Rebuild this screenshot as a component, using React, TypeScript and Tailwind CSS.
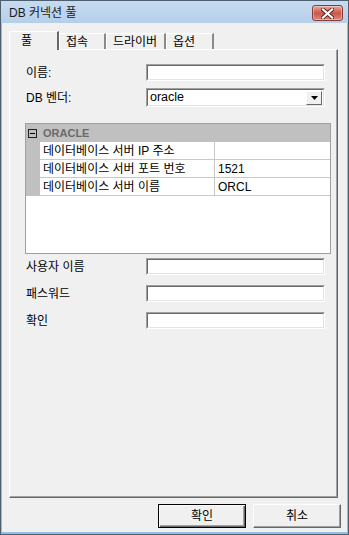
import type { ReactNode } from 'react'

const font = "font-['Liberation_Sans','Noto_Sans_CJK_KR',sans-serif]"

// sunken classic edit box
function Sunken({ className = '', children }: { className?: string; children?: ReactNode }) {
  return (
    <div className={`border border-t-[#a0a0a0] border-l-[#a0a0a0] border-b-white border-r-white ${className}`}>
      <div className="h-full bg-white border border-t-[#696969] border-l-[#696969] border-b-[#e3e3e3] border-r-[#e3e3e3] flex items-center">
        {children}
      </div>
    </div>
  )
}

function Row({ label, children }: { label: string; children?: ReactNode }) {
  return (
    <div className="flex items-center">
      <span className="w-[120px] text-[12px] leading-none">{label}</span>
      {children ?? <Sunken className="w-[179px] h-[17px]" />}
    </div>
  )
}

const tabs = [
  { label: '접속', w: 'w-[47px]' },
  { label: '드라이버', w: 'w-[60px]' },
  { label: '옵션', w: 'w-[48px]' },
]

const props = [
  ['데이터베이스 서버 IP 주소', ''],
  ['데이터베이스 서버 포트 번호', '1521'],
  ['데이터베이스 서버 이름', 'ORCL'],
]

export default function App() {
  return (
    <div className={`w-[349px] h-[535px] flex flex-col bg-[#8fbde6] border border-[#4d5e70] text-black ${font}`}>
      {/* ── title bar ── */}
      <div className="h-[23px] -mx-px -mt-px flex items-center justify-between pl-[8px] pr-[5px] bg-gradient-to-b from-[#c6dbf0] to-[#b6cfe9] border-t border-x border-[#4d5e70]">
        <span className="text-[12px] text-[#1b1b1b] mt-[1px]">DB 커넥션 풀</span>
        <div className="w-[31px] h-[16px] mt-[2px] rounded-[3px] border border-[#8a3b35] bg-gradient-to-b from-[#e9a99f] via-[#c9564a] to-[#d98a7c] flex items-center justify-center shadow-[inset_0_0_0_1px_rgba(255,255,255,0.35)]">
          <svg width="13" height="11" viewBox="0 0 13 11">
            <path d="M2 1.5 L11 9.5 M11 1.5 L2 9.5" stroke="#5a2320" strokeWidth="4" strokeLinecap="square" />
            <path d="M2 1.5 L11 9.5 M11 1.5 L2 9.5" stroke="#ffffff" strokeWidth="2.2" strokeLinecap="square" />
          </svg>
        </div>
      </div>

      {/* ── client area ── */}
      <div className="flex-1 mx-[1px] mb-[2px] bg-[#f0f0f0] flex flex-col pt-[8px] pl-[7px] pr-[6px]">
        {/* tabs */}
        <div className="flex items-end h-[18px] text-[12px] leading-none">
          <div className="relative z-10 w-[50px] h-[19px] -mb-px bg-[#f0f0f0] border-t border-l border-white border-r-2 border-r-[#696969] pl-[11px] pt-[3px]">
            풀
          </div>
          {tabs.map(t => (
            <div
              key={t.label}
              className={`${t.w} h-[16px] border-t border-l border-white border-r-2 border-r-[#8a8a8a] pl-[6px] pt-[2px]`}
            >
              {t.label}
            </div>
          ))}
        </div>

        {/* panel */}
        <div className="w-[329px] h-[449px] border-t border-l border-white border-r border-b border-r-[#696969] border-b-[#696969] shadow-[inset_-1px_-1px_0_#a0a0a0] pl-[16px] pt-[14px] flex flex-col">
          <Row label="이름:" />
          <div className="mt-[7px]">
            <Row label="DB 벤더:">
              <Sunken className="w-[179px] h-[19px]">
                <span className="flex-1 pl-[2px] text-[12.5px] leading-none">oracle</span>
                <div className="w-[16px] h-[14px] mr-[1px] bg-[#f0f0f0] border border-t-white border-l-white border-b-[#696969] border-r-[#696969] flex items-center justify-center">
                  <svg width="7" height="4" viewBox="0 0 7 4">
                    <path d="M0 0 H7 L3.5 4 Z" fill="#000" />
                  </svg>
                </div>
              </Sunken>
            </Row>
          </div>

          {/* property grid */}
          <div className="mt-[16px] -ml-[1px] w-[306px] h-[131px] border border-[#a0a0a0] bg-white flex flex-col text-[12px] leading-none">
            <div className="h-[18px] bg-[#c0c0c0] flex items-center">
              <div className="ml-[2px] w-[9px] h-[9px] border border-[#202020] flex items-center justify-center">
                <div className="w-[5px] h-px bg-[#000]" />
              </div>
              <span className="ml-[6px] font-bold text-[11px] text-[#6a6a6a] font-['Liberation_Sans',sans-serif]">ORACLE</span>
            </div>
            {props.map(([name, value]) => (
              <div key={name} className="flex h-[18px]">
                <div className="w-[14px] bg-[#c0c0c0]" />
                <div className="w-[175px] border-b border-r border-[#c8c8c8] pl-[3px] flex items-center">{name}</div>
                <div className="flex-1 border-b border-[#c8c8c8] pl-[3px] flex items-center">{value}</div>
              </div>
            ))}
          </div>

          <div className="mt-[4px]">
            <Row label="사용자 이름" />
          </div>
          <div className="mt-[10px]">
            <Row label="패스워드" />
          </div>
          <div className="mt-[10px]">
            <Row label="확인" />
          </div>
        </div>

        {/* buttons */}
        <div className="mt-[6px] flex justify-end gap-[7px] text-[12px]">
          <button className="w-[88px] h-[24px] border border-[#000] bg-[#f0f0f0] shadow-[inset_1px_1px_0_#fff,inset_-1px_-1px_0_#696969,inset_-2px_-2px_0_#a0a0a0]">
            확인
          </button>
          <button className="w-[88px] h-[24px] border border-t-white border-l-white border-b-[#696969] border-r-[#696969] bg-[#f0f0f0] shadow-[inset_-1px_-1px_0_#a0a0a0]">
            취소
          </button>
        </div>
      </div>
    </div>
  )
}
